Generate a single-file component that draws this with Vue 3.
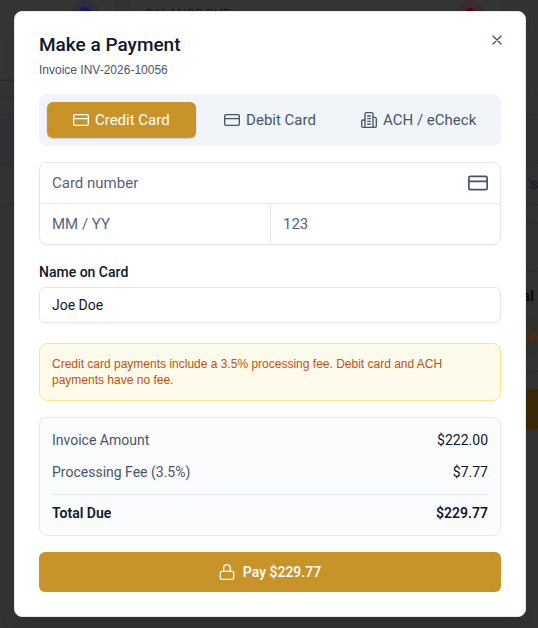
<script setup>
import { computed, ref } from 'vue';

const methods = [
	{ id: 'credit', label: 'Credit Card', icon: 'card' },
	{ id: 'debit', label: 'Debit Card', icon: 'card' },
	{ id: 'ach', label: 'ACH / eCheck', icon: 'bank' },
];

const method = ref('credit');
const cardNumber = ref('');
const expiry = ref('');
const cvc = ref('');
const name = ref('Joe Doe');
const showModal = ref(true);

const amount = 222;
const fee = computed(() => (method.value === 'credit' ? amount * 0.035 : 0));
const total = computed(() => amount + fee.value);

const money = (value) => '$' + value.toFixed(2);

const closeModal = () => {
	showModal.value = false;
};
</script>

<template>
	<div class="page">
		<div class="behind" aria-hidden="true">
			<div class="top-card first"><span class="dot blue"></span></div>
			<div class="top-card second">
				<span class="caption">BALANCE DUE</span>
				<span class="dot red"></span>
			</div>
			<div class="top-card third"></div>
			<div class="left-rows">
				<div class="row-head"></div>
				<div class="row-gap"></div>
				<div class="row-body"></div>
				<div class="row-foot"></div>
			</div>
			<div class="side">
				<div class="side-head"></div>
				<div class="side-name">'s</div>
				<div class="side-gap"></div>
				<div class="side-space"></div>
				<div class="side-total">al</div>
				<div class="side-due">ue</div>
				<div class="side-line"></div>
				<div class="side-button"></div>
			</div>
		</div>

		<div class="modal" v-if="showModal" role="dialog" aria-labelledby="title">
			<button class="close" type="button" aria-label="Close" @click="closeModal">
				<svg width="16" height="16" viewBox="0 0 24 24">
					<path d="M18 6 6 18M6 6l12 12" />
				</svg>
			</button>

			<h2 id="title">Make a Payment</h2>
			<p class="invoice">Invoice INV-2026-10056</p>

			<div class="tabs">
				<button
					v-for="item in methods"
					:key="item.id"
					type="button"
					class="tab"
					:class="{ active: method === item.id }"
					:aria-pressed="method === item.id"
					@click="method = item.id"
				>
					<svg v-if="item.icon === 'card'" width="16" height="16" viewBox="0 0 24 24">
						<rect x="1" y="4" width="22" height="16" rx="2" />
						<path d="M1 10h22" />
					</svg>
					<svg v-else width="16" height="16" viewBox="0 0 24 24">
						<path d="M6 23V3a2 2 0 0 1 2-2h8a2 2 0 0 1 2 2v20Z" />
						<path d="M6 12H3a2 2 0 0 0-2 2v7a2 2 0 0 0 2 2h3M18 8h3a2 2 0 0 1 2 2v11a2 2 0 0 1-2 2h-3" />
						<path d="M10 6h4M10 10h4M10 14h4M10 18h4" />
					</svg>
					{{ item.label }}
				</button>
			</div>

			<div class="card-box">
				<div class="number">
					<input v-model="cardNumber" aria-label="Card number" placeholder="Card number" />
					<svg width="20" height="20" viewBox="0 0 24 24">
						<rect x="1" y="4" width="22" height="16" rx="2" />
						<path d="M1 10h22" />
					</svg>
				</div>
				<div class="details">
					<input v-model="expiry" aria-label="Expiry date" placeholder="MM / YY" />
					<input v-model="cvc" aria-label="Security code" placeholder="123" />
				</div>
			</div>

			<label class="name-label" for="name">Name on Card</label>
			<input id="name" class="name" v-model="name" />

			<p class="notice">
				Credit card payments include a 3.5% processing fee. Debit card and ACH payments have no fee.
			</p>

			<dl class="summary">
				<div class="line">
					<dt>Invoice Amount</dt>
					<dd>{{ money(amount) }}</dd>
				</div>
				<div class="line">
					<dt>Processing Fee (3.5%)</dt>
					<dd>{{ money(fee) }}</dd>
				</div>
				<div class="line total">
					<dt>Total Due</dt>
					<dd>{{ money(total) }}</dd>
				</div>
			</dl>

			<button class="pay" type="button">
				<svg width="16" height="16" viewBox="0 0 24 24">
					<rect x="2" y="11" width="20" height="12" rx="2" />
					<path d="M7 11V6a5 5 0 0 1 10 0v5" />
				</svg>
				Pay {{ money(total) }}
			</button>
		</div>
	</div>
</template>

<style>
body {
	margin: 0;
	background: #333333;
}
</style>

<style scoped>
* {
	box-sizing: border-box;
}

.page {
	position: relative;
	min-height: 100vh;
	padding: 11px 12px 11px 14px;
	overflow: hidden;
	font-family: Roboto, 'Liberation Sans', sans-serif;
	font-size: 15px;
	line-height: 20px;
	color: #0f172a;
}

svg {
	flex-shrink: 0;
	fill: none;
	stroke: currentColor;
	stroke-width: 2;
	stroke-linecap: round;
	stroke-linejoin: round;
}

/* dimmed dashboard under the dialog */
.behind > * {
	position: absolute;
}
.top-card {
	top: 0;
	height: 80px;
	background: #333633;
	border: 1px solid #2d2f30;
	border-top: 0;
}
.first {
	left: 0;
	width: 116px;
	border-left: 0;
}
.second {
	left: 128px;
	right: 37px;
}
.third {
	left: 534px;
	right: 0;
	height: 95px;
	background: none;
	border-right: 0;
	border-bottom-left-radius: 8px;
}
.caption {
	position: absolute;
	left: 16px;
	top: 4px;
	font-size: 13px;
	color: #15191f;
}
.dot {
	position: absolute;
	top: 0;
	width: 28px;
	height: 28px;
	border-radius: 50%;
}
.blue {
	left: 71px;
	background: radial-gradient(circle at 50% 45%, #0a1a70 5px, #2c2f3b 6px);
}
.red {
	right: 16px;
	background: radial-gradient(circle at 50% 45%, #5a0016 4px, #3b2a2e 5px);
}
.left-rows {
	left: 0;
	top: 80px;
	width: 14px;
}
.row-head {
	height: 18px;
	border: solid #2b2b2b;
	border-width: 1px 0;
}
.row-gap {
	height: 17px;
	border-bottom: 1px solid #2b2d2f;
}
.row-body {
	height: 48px;
	background: #303234;
}
.row-foot {
	height: 42px;
	border: solid #2b2b2b;
	border-width: 1px 0;
}
.side {
	top: 114px;
	right: 0;
	width: 20px;
	border-top: 1px solid #2b2d2f;
	text-align: right;
	color: #0a0c12;
}
.side-head {
	height: 49px;
	background: #303234;
	border-bottom: 1px solid #2b2d2f;
}
.side-name {
	height: 41px;
	line-height: 40px;
	color: #15191f;
	border-bottom: 1px solid #2b2d2f;
}
.side-gap {
	height: 18px;
	border-bottom: 1px solid #2b2d2f;
}
.side-space {
	height: 49px;
	border-bottom: 1px solid #2b2d2f;
}
.side-total {
	height: 47px;
	padding: 14px 4px 0 0;
	font-weight: 700;
}
.side-due {
	height: 36px;
	padding: 8px 1px 0 0;
	font-weight: 700;
	background: #33312b;
	color: #5f2706;
}
.side-line {
	height: 17px;
	margin-bottom: 17px;
	border-bottom: 1px solid #2b2d2f;
}
.side-button {
	height: 40px;
	background: #3a2a0a;
}

.modal {
	position: relative;
	max-width: 512px;
	margin: 0 auto;
	padding: 24px;
	background: #ffffff;
	border: 1px solid #e2e8f0;
	border-radius: 8px;
	box-shadow: 0 10px 15px rgba(0, 0, 0, 0.1);
}
.close {
	position: absolute;
	top: 20px;
	right: 20px;
	display: flex;
	padding: 0;
	border: 0;
	background: none;
	color: #475569;
	cursor: pointer;
}

h2 {
	margin: 0 0 6px;
	font-size: 19px;
	line-height: 18px;
	font-weight: 500;
}
.invoice {
	margin: 0 0 14px;
	font-family: 'Liberation Sans', sans-serif;
	font-size: 12px;
	line-height: 20px;
	color: #475569;
}

.tabs {
	display: grid;
	grid-template-columns: repeat(3, 1fr);
	padding: 8px;
	margin-bottom: 16px;
	background: #f1f5f9;
	border-radius: 8px;
}
.tab,
.pay {
	display: flex;
	align-items: center;
	justify-content: center;
	gap: 6px;
	height: 36px;
	padding: 0;
	border: 0;
	border-radius: 6px;
	background: none;
	font: inherit;
	color: #475569;
	cursor: pointer;
}
.tab.active,
.pay {
	background: #c8942a;
	color: #ffffff;
}
.tab.active {
	box-shadow: 0 1px 2px rgba(0, 0, 0, 0.15);
}

input {
	display: block;
	width: 100%;
	min-width: 0;
	padding: 0 12px;
	border: 0;
	outline: 0;
	background: none;
	font: inherit;
	color: inherit;
}
input::placeholder {
	color: #56647a;
	opacity: 1;
}
.card-box {
	margin-bottom: 16px;
	border: 1px solid #e2e8f0;
	border-radius: 8px;
	box-shadow: 0 1px 2px rgba(0, 0, 0, 0.05);
}
.card-box input {
	height: 40px;
}
.number {
	display: flex;
	align-items: center;
	padding-right: 12px;
	border-bottom: 1px solid #e2e8f0;
	color: #475569;
}
.details {
	display: grid;
	grid-template-columns: 1fr 1fr;
}
.details input + input {
	border-left: 1px solid #e2e8f0;
}

.name-label {
	display: block;
	margin-bottom: 4px;
	font-size: 14px;
	line-height: 22px;
	font-weight: 500;
}
.name {
	height: 36px;
	margin-bottom: 20px;
	border: 1px solid #e2e8f0;
	border-radius: 6px;
	box-shadow: 0 1px 2px rgba(0, 0, 0, 0.05);
	font-size: 14px;
}

.notice {
	margin: 0 0 16px;
	padding: 12px;
	border: 1px solid #fde68a;
	border-radius: 8px;
	background: #fffbeb;
	font-family: 'Liberation Sans', sans-serif;
	font-size: 12px;
	line-height: 16px;
	color: #c2500f;
}

.summary {
	display: flex;
	flex-direction: column;
	gap: 12px;
	margin: 0 0 16px;
	padding: 12px;
	border: 1px solid #e2e8f0;
	border-radius: 8px;
	background: #fbfcfe;
	font-size: 14px;
}
.line {
	display: flex;
	justify-content: space-between;
}
.line dt {
	color: #475569;
}
.line dd {
	margin: 0;
}
.total {
	padding-top: 8px;
	border-top: 1px solid #e2e8f0;
	font-weight: 600;
}
.line.total dt {
	color: inherit;
}

.pay {
	width: 100%;
	height: 40px;
	gap: 8px;
	font-size: 14px;
	font-weight: 500;
}
</style>
